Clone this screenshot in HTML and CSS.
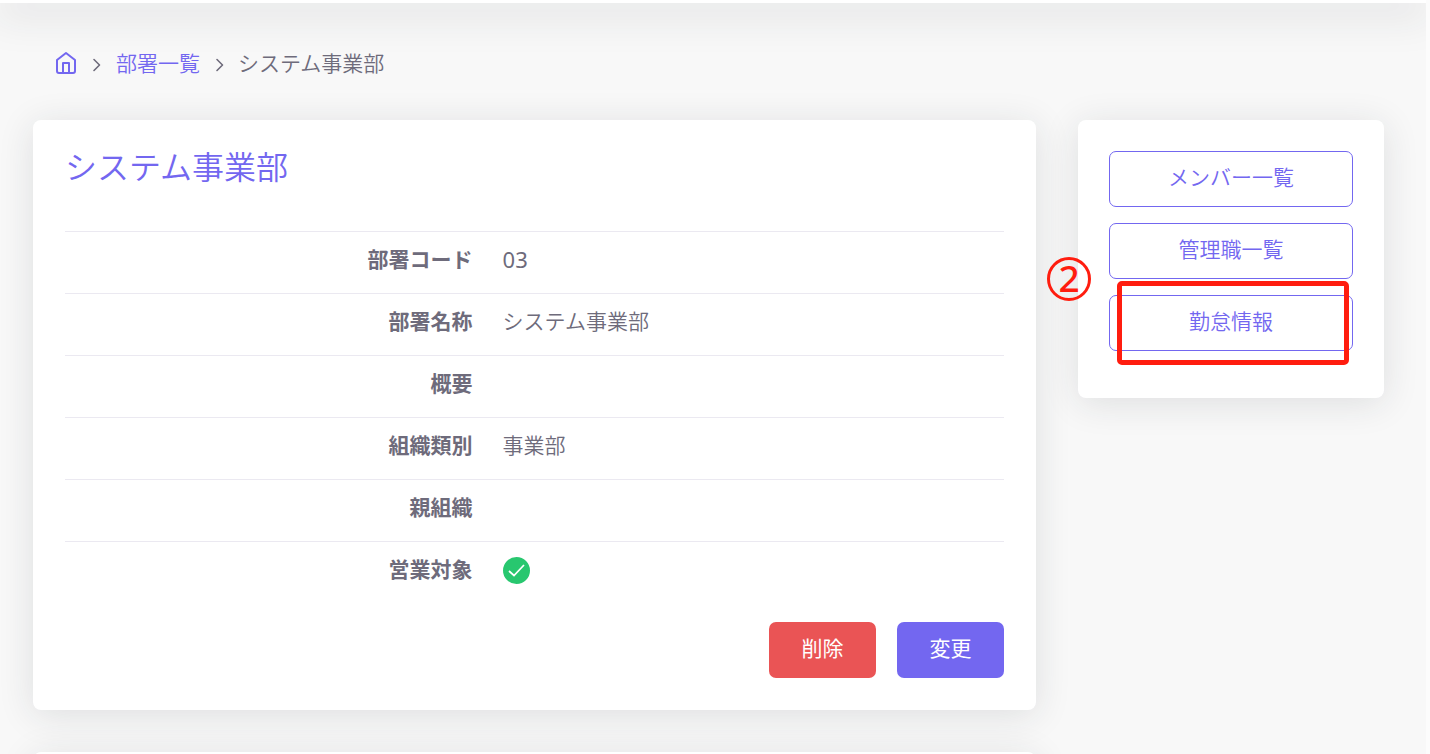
FILE: index.html
```html
<!DOCTYPE html>
<html lang="ja">
<head>
<meta charset="utf-8">
<title>システム事業部</title>
<link rel="stylesheet" href="styles.css">
</head>
<body>
<div class="page">
  <header class="topbar"></header>
  <nav class="breadcrumb" aria-label="breadcrumb">
    <a href="#" class="home" aria-label="home"><svg width="24" height="24" viewBox="0 0 24 24" fill="none" stroke="currentColor" stroke-width="2" stroke-linecap="round" stroke-linejoin="round"><path d="M3 9l9-7 9 7v11a2 2 0 0 1-2 2H5a2 2 0 0 1-2-2z"/><path d="M9 22V12h6v10"/></svg></a>
    <svg class="chevron" width="20" height="20" viewBox="0 0 20 20" fill="none" stroke="currentColor" stroke-width="1.600" stroke-linecap="round" stroke-linejoin="round"><path d="M7 17.500l5.500-5.500-5.500-5.500"/></svg>
    <a href="#">部署一覧</a>
    <svg class="chevron" width="20" height="20" viewBox="0 0 20 20" fill="none" stroke="currentColor" stroke-width="1.600" stroke-linecap="round" stroke-linejoin="round"><path d="M8 17.500l5.500-5.500-5.500-5.500"/></svg>
    <span>システム事業部</span>
  </nav>
  <div class="columns">
    <main class="main">
      <section class="card detail">
        <h1 class="title">システム事業部</h1>
        <table class="fields">
          <tr><th scope="row">部署コード</th><td class="code">03</td></tr>
          <tr><th scope="row">部署名称</th><td>システム事業部</td></tr>
          <tr><th scope="row">概要</th><td></td></tr>
          <tr><th scope="row">組織類別</th><td>事業部</td></tr>
          <tr><th scope="row">親組織</th><td></td></tr>
          <tr><th scope="row">営業対象</th><td class="flag"><svg class="check" width="28" height="28" viewBox="0 0 28 28" fill="none"><circle cx="13.500" cy="13.500" r="13.500" fill="#28c76f"/><path d="M6 14l5 4.500 10-10.500" stroke="#fff" stroke-width="1.700"/></svg></td></tr>
        </table>
        <div class="actions">
          <button type="button" class="btn danger">削除</button>
          <button type="button" class="btn primary">変更</button>
        </div>
      </section>
      <section class="card next"></section>
    </main>
    <aside class="card side">
      <button type="button" class="btn outline">メンバー一覧</button>
      <button type="button" class="btn outline">管理職一覧</button>
      <div class="marked">
        <button type="button" class="btn outline">勤怠情報</button>
        <span class="frame"></span>
        <span class="marker">2</span>
      </div>
    </aside>
  </div>
</div>
</body>
</html>
```
FILE: styles.css
```css
* { box-sizing: border-box; }
body {
  margin: 0;
  background: #fcfcfc;
  color: #6e6b7b;
  font-family: "Noto Sans", "Noto Sans CJK JP", sans-serif;
  font-size: 21px;
  font-weight: 350;
  line-height: 30px;
}
.page {
  height: 100vh;
  overflow: hidden;
  margin-right: 4px;
  background: #f8f8f8;
}
.topbar {
  height: 3px;
  background: #fff;
  box-shadow: 0 4px 40px 6px rgba(34, 41, 47, 0.17);
}
.breadcrumb {
  display: flex;
  align-items: center;
  gap: 9px;
  padding: 45px 54px 42px;
}
.breadcrumb svg { display: block; }
.breadcrumb a, .title { color: #7367f0; text-decoration: none; }
.columns {
  display: grid;
  grid-template-columns: 1003fr 306fr;
  align-items: start;
  gap: 42px;
  padding: 0 42px 0 33px;
}
.card {
  background: #fff;
  border-radius: 8px;
  box-shadow: 0 5px 36px rgba(34, 41, 47, 0.12);
}
.detail { padding: 23px 32px 32px; }
.title {
  margin: 0;
  padding-bottom: 40px;
  font-size: 32px;
  font-weight: 350;
  line-height: 48px;
}
.fields {
  width: 100%;
  table-layout: fixed;
  border-collapse: collapse;
}
.fields tr { height: 62px; }
.fields th, .fields td {
  border-top: 1px solid #ebe9f1;
  padding: 11px 15px 19px;
}
.fields th { width: 45%; text-align: right; font-weight: 700; }
.fields .code { font-size: 22px; font-weight: 400; }
.fields .flag { padding-top: 13px; padding-bottom: 17px; }
.check { display: block; }
.actions {
  display: flex;
  justify-content: flex-end;
  gap: 21px;
  padding-top: 18px;
}
.btn {
  height: 56px;
  padding: 0 31px 4px;
  border: 1px solid transparent;
  border-radius: 7px;
  font: inherit;
  color: #fff;
}
.danger, .primary { min-width: 107px; font-weight: 400; }
.danger { background: #ea5455; }
.primary { background: #7367f0; }
.next { height: 200px; margin-top: 42px; }
.side {
  display: flex;
  flex-direction: column;
  gap: 16px;
  padding: 31px 31px 47px;
}
.outline {
  width: 100%;
  background: none;
  border-color: #7367f0;
  color: #7367f0;
}
.marked { position: relative; height: 56px; }
.frame {
  position: absolute;
  inset: -14px 4px -14px 8px;
  border: 5px solid #ff1d0f;
  border-radius: 5px;
}
.marker {
  position: absolute;
  left: -62px;
  top: -38px;
  width: 44px;
  height: 44px;
  border: 3px solid #ff1d0f;
  border-radius: 50%;
  color: #ff1d0f;
  font-size: 37px;
  font-weight: 500;
  line-height: 36px;
  text-align: center;
}
```
